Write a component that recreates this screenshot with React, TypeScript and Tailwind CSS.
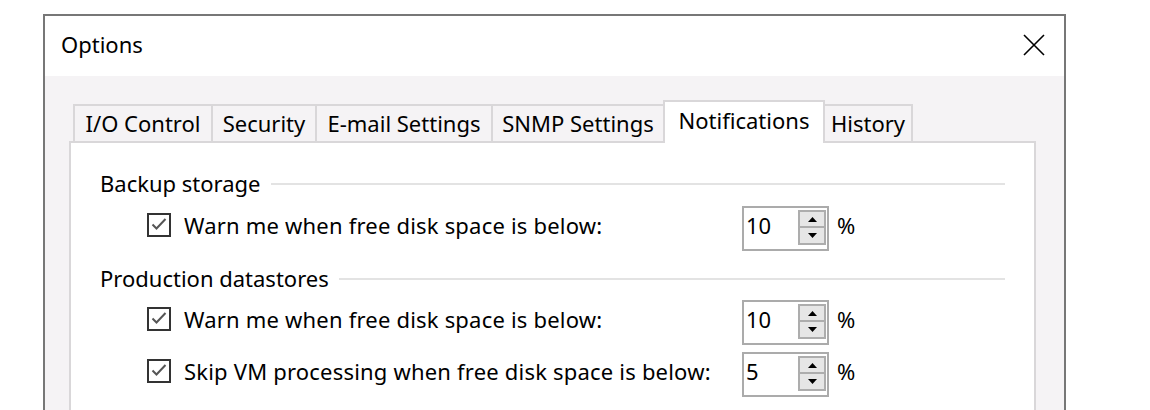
import React from "react";

const tabs = [
  { label: "I/O Control", w: "w-[138px]" },
  { label: "Security", w: "w-[104px]" },
  { label: "E-mail Settings", w: "w-[176px]" },
  { label: "SNMP Settings", w: "w-[172px]" },
  { label: "Notifications", w: "w-[162px]" },
  { label: "History", w: "w-[88px]" },
];
const activeTab = 4;

function CheckBox() {
  return (
    <svg width="24" height="24" viewBox="0 0 24 24" className="shrink-0">
      <rect x="1" y="1" width="22" height="22" fill="#fff" stroke="#333" strokeWidth="2" />
      <path d="M5.5 11.5 L9.5 15.5 L18.5 6" fill="none" stroke="#555" strokeWidth="2" />
    </svg>
  );
}

function Spinner({ value }: { value: string }) {
  return (
    <div className="w-[87px] h-[45px] border-2 border-[#ababab] bg-white flex items-start shrink-0">
      <div className="flex-1 mt-[5px] h-[24px] flex items-center pl-[2px]">{value}</div>
      <div className="mt-[2px] mr-[1px] flex flex-col">
        <div className="w-[28px] h-[18px] bg-[#e6e6e6] border-2 border-[#adadad] flex items-center justify-center">
          <svg width="9" height="5" viewBox="0 0 9 5">
            <path d="M0 5 L4.5 0 L9 5 Z" fill="#000" />
          </svg>
        </div>
        <div className="w-[28px] h-[17px] bg-[#e6e6e6] border-2 border-t-0 border-[#adadad] flex items-center justify-center">
          <svg width="9" height="5" viewBox="0 0 9 5">
            <path d="M0 0 L9 0 L4.5 5 Z" fill="#000" />
          </svg>
        </div>
      </div>
    </div>
  );
}

function Row({ label, value, className }: { label: string; value: string; className: string }) {
  return (
    <div className={`flex items-start h-[45px] pl-[47px] ${className}`}>
      <div className="w-[595px] h-[24px] mt-[7px] flex items-center gap-[13px] shrink-0">
        <CheckBox />
        <span className="whitespace-nowrap tracking-[0.2px]">{label}</span>
      </div>
      <Spinner value={value} />
      <div className="ml-[8px] mt-[7px] h-[24px] flex items-center">%</div>
    </div>
  );
}

function Group({ title, className }: { title: string; className: string }) {
  return (
    <div className={`flex items-center h-[30px] ${className}`}>
      <span className="whitespace-nowrap pb-[2px]">{title}</span>
      <div className="flex-1 h-[2px] bg-[#e3e3e3] ml-[10px]" />
    </div>
  );
}

export default function App() {
  return (
    <div className="w-[1150px] h-[410px] overflow-hidden bg-white pt-[14px] pl-[43px] font-['Noto_Sans',sans-serif] text-[22px] text-black">
      <div className="w-[1023px] h-[420px] border-2 border-[#777777] flex flex-col">
        {/* Title bar */}
        <div className="h-[60px] shrink-0 bg-white flex items-center justify-between pl-[16px] pr-[19px]">
          <span className="pb-[3px]">Options</span>
          <svg width="22" height="22" viewBox="0 0 22 22" className="mb-[3px]">
            <path d="M1 1 L21 21 M21 1 L1 21" stroke="#000" strokeWidth="1.6" />
          </svg>
        </div>

        {/* Body */}
        <div className="flex-1 bg-[#f5f3f5] pl-[24px] pt-[24px]">
          <div className="flex items-end h-[41px] pl-[4px]">
            {tabs.map((t, i) => {
              const active = i === activeTab;
              const prevActive = i - 1 === activeTab;
              const last = i === tabs.length - 1;
              return (
                <div
                  key={t.label}
                  className={`${t.w} flex items-center justify-center border-t-2 border-[#d9d7d9] whitespace-nowrap ${
                    prevActive ? "" : "border-l-2"
                  } ${active || last ? "border-r-2" : ""} ${
                    active ? "h-[43px] -mb-[2px] bg-white relative z-10 pb-[4px]" : "h-[37px]"
                  }`}
                >
                  {t.label}
                </div>
              );
            })}
          </div>

          <div className="w-[967px] h-[300px] bg-white border-2 border-[#d9d7d9] pt-[26px] pl-[29px] pr-[29px]">
            <Group title="Backup storage" className="" />
            <Row label="Warn me when free disk space is below:" value="10" className="mt-[7px]" />
            <Group title="Production datastores" className="mt-[13px]" />
            <Row label="Warn me when free disk space is below:" value="10" className="mt-[6px]" />
            <Row label="Skip VM processing when free disk space is below:" value="5" className="mt-[7px]" />
          </div>
        </div>
      </div>
    </div>
  );
}
